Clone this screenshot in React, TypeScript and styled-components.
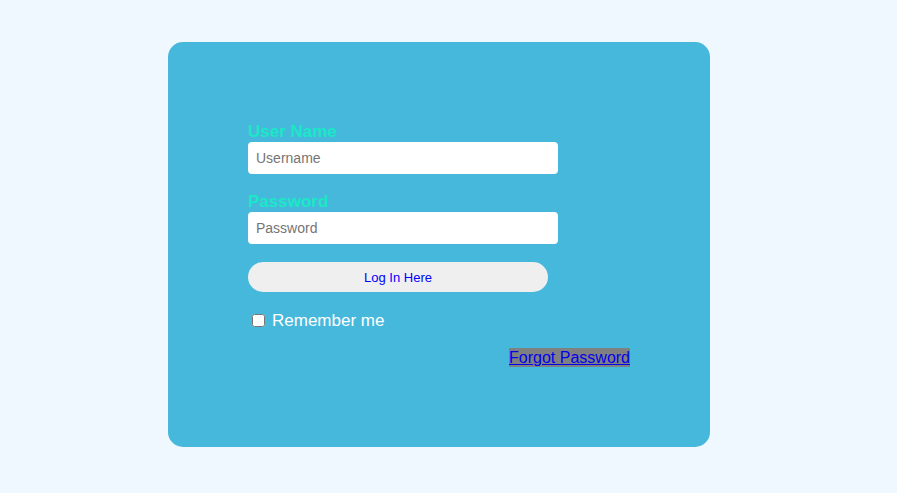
import React from "react";
import styled, { createGlobalStyle } from "styled-components";

const Global = createGlobalStyle`
  html, body { background: #f0f8ff; }
  body { margin: 8px; font-family: "Liberation Sans", Arial, sans-serif; }
`;

const Card = styled.form`
  box-sizing: border-box;
  width: 542px;
  margin: 34px 0 0 160px;
  padding: 80px 80px 80px;
  background: #45b8dc;
  border-radius: 15px;
  display: flex;
  flex-direction: column;
`;

const Label = styled.label`
  font-size: 17px;
  font-weight: bold;
  line-height: 19px;
  height: 20px;
  color: #1ae8c6;
`;

const Input = styled.input`
  box-sizing: border-box;
  width: 310px;
  height: 32px;
  border: none;
  border-radius: 4px;
  padding: 0 8px;
  font-family: "Liberation Sans", Arial, sans-serif;
  font-size: 14px;
  background: #fff;
  margin-bottom: 18px;
  outline: none;
  &::placeholder { color: #757575; }
`;

const Button = styled.button`
  width: 300px;
  height: 30px;
  border: none;
  border-radius: 15px;
  background: #efefef;
  color: #0000ff;
  font-family: "Liberation Sans", Arial, sans-serif;
  font-size: 13px;
  margin-bottom: 18px;
  padding: 0;
`;

const CheckRow = styled.div`
  display: flex;
  align-items: center;
  height: 20px;
  color: #fff;
  font-size: 17px;
  margin-bottom: 18px;
`;

const Check = styled.input`
  margin: 0 7px 0 4px;
  width: 13px;
  height: 13px;
`;

const CheckText = styled.span`
  padding-top: 1px;
`;

const LinkRow = styled.div`
  display: flex;
  justify-content: flex-end;
  height: 19px;
`;

const Forgot = styled.a`
  background: #808080;
  color: #0000ee;
  font-size: 16px;
  line-height: 19px;
  text-decoration: underline;
`;

export default function App() {
  return (
    <>
      <Global />
      <Card onSubmit={(e) => e.preventDefault()}>
        <Label>User Name</Label>
        <Input type="text" placeholder="Username" />
        <Label>Password</Label>
        <Input type="password" placeholder="Password" />
        <Button type="submit">Log In Here</Button>
        <CheckRow>
          <Check type="checkbox" />
          <CheckText>Remember me</CheckText>
        </CheckRow>
        <LinkRow>
          <Forgot href="#">Forgot Password</Forgot>
        </LinkRow>
      </Card>
    </>
  );
}
